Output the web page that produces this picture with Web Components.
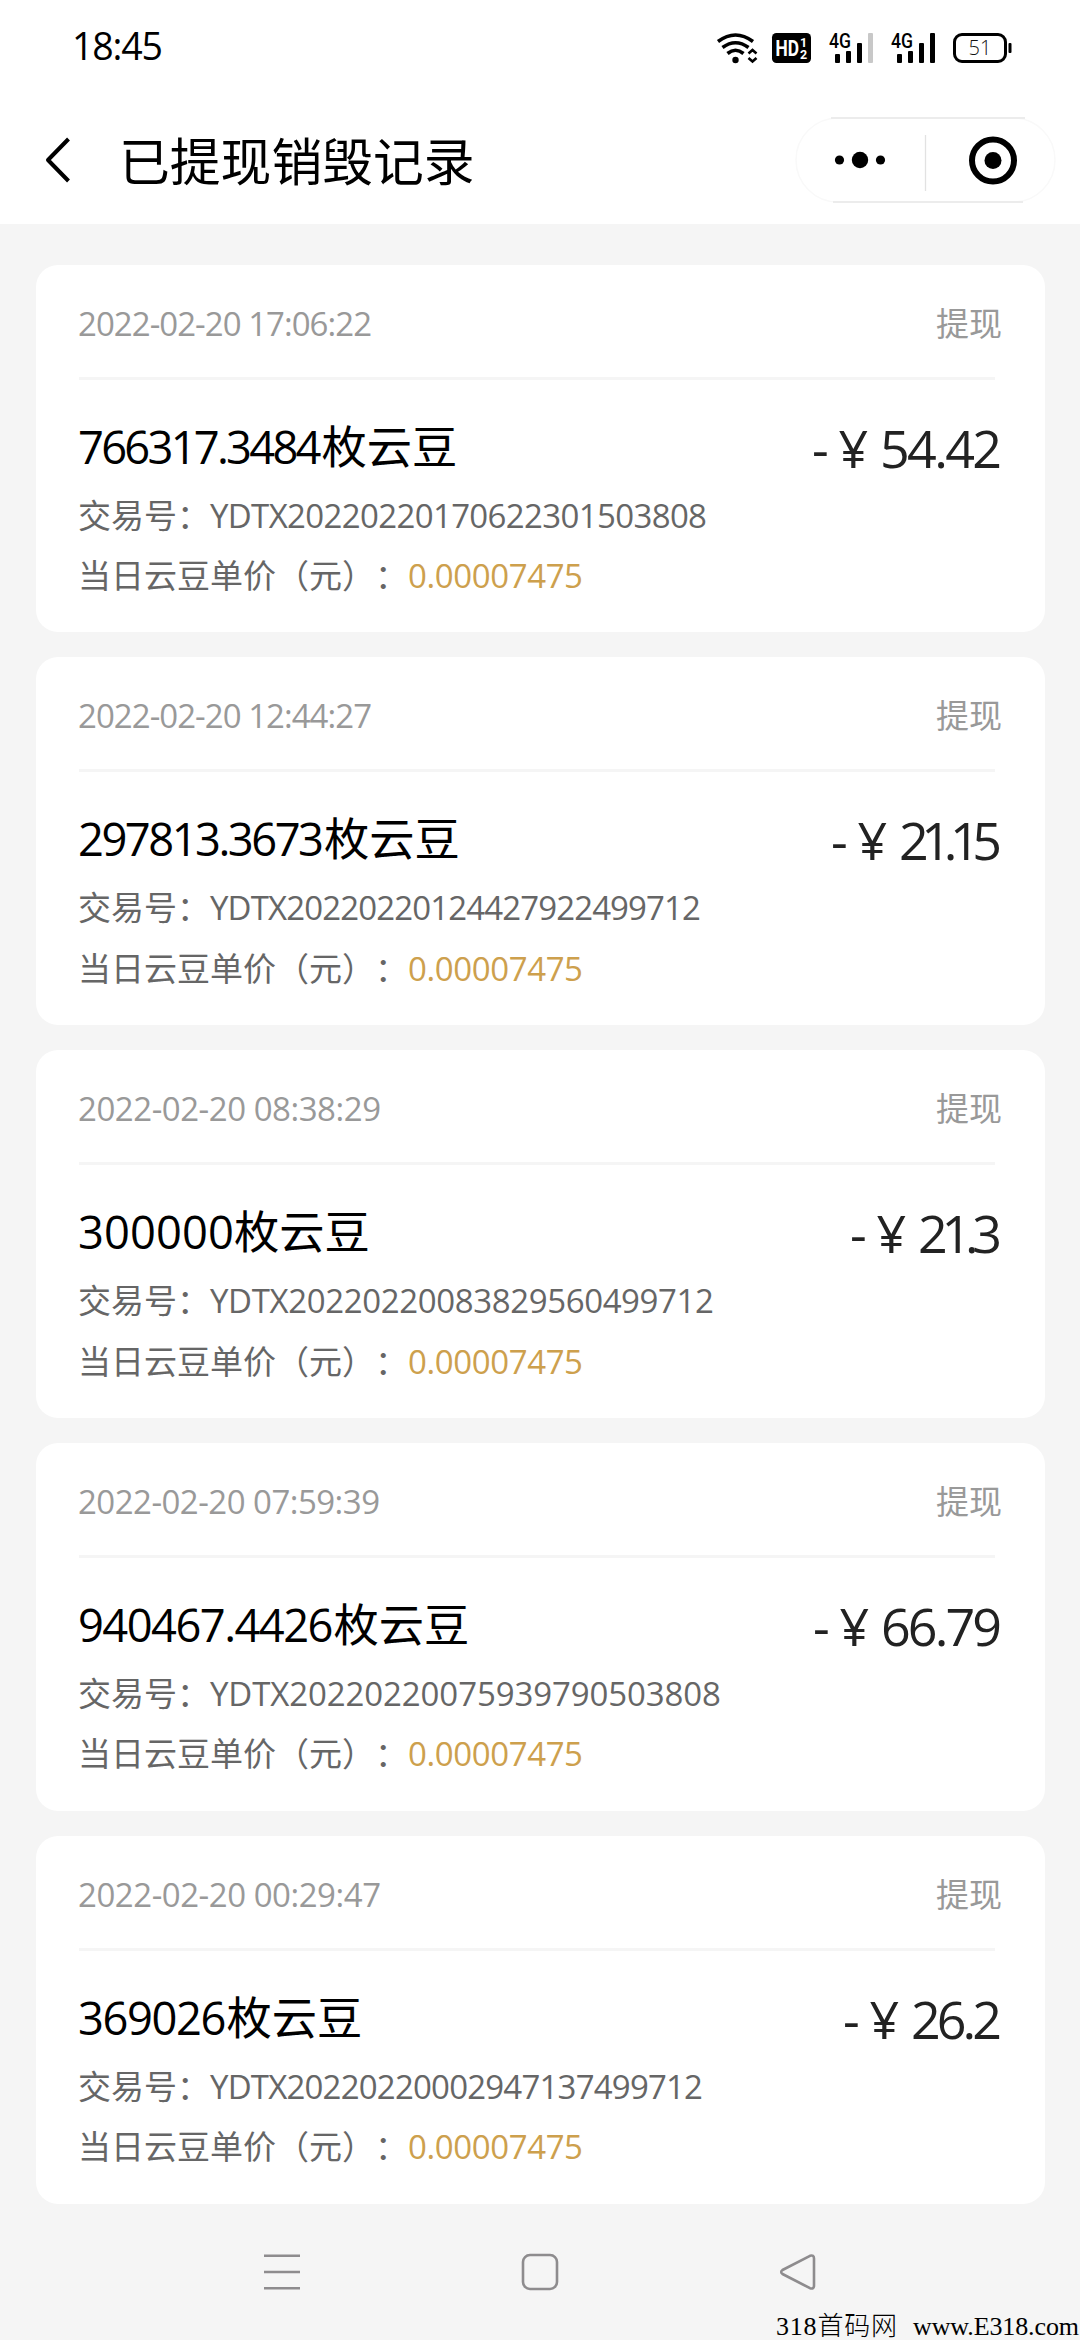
<!DOCTYPE html>
<html lang="zh-CN">
<head>
<meta charset="utf-8">
<title>已提现销毁记录</title>
<style>
    body {
        margin: 0;
        background: #f5f5f5;
        font-family: "Open Sans", "Noto Sans CJK SC", sans-serif;
        text-spacing-trim: space-all;
        color: #000;
    }
</style>
</head>
<body>
<app-page>
    <status-bar slot="status" time="18:45" battery="51"></status-bar>
    <title-bar slot="title">已提现销毁记录</title-bar>
    <record-card date="2022-02-20 17:06:22" count="766317.3484" amount="54.42" serial="YDTX20220220170622301503808" price="0.00007475" widths="294,243.5,122,497"></record-card>
    <record-card date="2022-02-20 12:44:27" count="297813.3673" amount="21.15" serial="YDTX20220220124427922499712" price="0.00007475" widths="294,246,103,491"></record-card>
    <record-card date="2022-02-20 08:38:29" count="300000" amount="21.3" serial="YDTX20220220083829560499712" price="0.00007475" widths="303,156,84,504"></record-card>
    <record-card date="2022-02-20 07:59:39" count="940467.4426" amount="66.79" serial="YDTX20220220075939790503808" price="0.00007475" widths="302,255.5,121,511"></record-card>
    <record-card date="2022-02-20 00:29:47" count="369026" amount="26.2" serial="YDTX20220220002947137499712" price="0.00007475" widths="303,148.5,91,493"></record-card>
    <system-nav slot="nav"></system-nav>
    <site-mark slot="mark"></site-mark>
</app-page>

<script>
// Text spread (or tightened) to a given width with letter-spacing
class FitText extends HTMLElement {
    constructor() {
        super();
        this.attachShadow({ mode: "open" });
        this.shadowRoot.innerHTML = `
        <style>
          :host { display: inline-block; }
          span { display: inline-block; white-space: pre; }
        </style>
        <span><slot></slot></span>
      `;
    }

    connectedCallback() {
        const span = this.shadowRoot.querySelector("span");
        const width = parseFloat(this.getAttribute("width"));
        const natural = span.getBoundingClientRect().width;
        const spacing = (width - natural) / (this.textContent.length - 1);
        span.style.letterSpacing = `${spacing}px`;
        span.style.marginRight = `${-spacing}px`;
    }
}

class AppPage extends HTMLElement {
    constructor() {
        super();
        this.attachShadow({ mode: "open" });
        this.shadowRoot.innerHTML = `
        <style>
          :host {
            display: flex;
            flex-direction: column;
            position: relative;
            width: 1080px;
            height: 2340px;
            overflow: hidden;
          }
          main {
            display: flex;
            flex-direction: column;
            gap: 25px;
            padding: 41px 35px 0 36px;
          }
        </style>
        <slot name="status"></slot>
        <slot name="title"></slot>
        <main><slot></slot></main>
        <slot name="nav"></slot>
        <slot name="mark"></slot>
      `;
    }
}

class StatusBar extends HTMLElement {
    constructor() {
        super();
        this.attachShadow({ mode: "open" });
        this.shadowRoot.innerHTML = `
        <style>
          :host {
            display: flex;
            justify-content: space-between;
            align-items: center;
            box-sizing: border-box;
            height: 97px;
            padding: 0 68px 0 72px;
            background: #fff;
          }
          .time { font-size: 37.5px; line-height: 50px; margin-top: -3px; }
          .icons { display: flex; align-items: center; }
          svg { display: block; overflow: visible; }
          .wifi { margin-right: 15px; }
          .hd { margin-right: 18px; }
          .sim { margin-right: 18px; }
        </style>
        <fit-text class="time" width="91">${this.getAttribute("time")}</fit-text>
        <div class="icons">
          <svg class="wifi" width="40" height="30" viewBox="0 0 40 30">
            <g fill="none" stroke="#000" stroke-width="3.6">
              <path d="M1 8.5 Q18.5 -4.5 36 8.5"/>
              <path d="M5.5 14.5 Q18.5 5 31.5 14.5"/>
              <path d="M10.5 20.5 Q18.5 14 26.5 20.5"/>
            </g>
            <circle cx="18.5" cy="27" r="3.2"/>
            <path d="M31.5 20.5 L35.5 17 L39.5 20.5 M31.5 25 L35.5 28.5 L39.5 25" fill="none" stroke="#000" stroke-width="2.6"/>
          </svg>
          <svg class="hd" width="39" height="30" viewBox="0 0 39 30">
            <rect width="39" height="30" rx="4.5"/>
            <g fill="#fff" font-family="Roboto, sans-serif" font-weight="700">
              <text x="3.5" y="22.5" font-size="21.5" textLength="23.5" lengthAdjust="spacingAndGlyphs">HD</text>
              <text x="28" y="13.5" font-size="12.5">1</text>
              <text x="28" y="25.5" font-size="12.5">2</text>
            </g>
          </svg>
          ${this.signal("#c8c8c8")}
          ${this.signal("#000")}
          <svg width="59" height="30" viewBox="0 0 59 30">
            <rect x="1.5" y="1.5" width="51" height="27" rx="7.5" fill="#fff" stroke="#000" stroke-width="3"/>
            <rect x="55.5" y="10" width="3" height="10" rx="1"/>
            <text x="27" y="22" font-size="20" text-anchor="middle" font-weight="300" fill="#111">${this.getAttribute("battery")}</text>
          </svg>
        </div>
      `;
    }

    signal(last) {
        return `
          <svg class="sim" width="44" height="30" viewBox="0 0 44 30">
            <text x="0" y="14.5" font-family="Roboto, sans-serif" font-weight="500" font-size="19.5" textLength="22" lengthAdjust="spacingAndGlyphs">4G</text>
            <rect x="6" y="21" width="5" height="9" rx="1"/>
            <rect x="17" y="18" width="5" height="12" rx="1"/>
            <rect x="28" y="10" width="5" height="20" rx="1"/>
            <rect x="39" y="0" width="5" height="30" rx="1" fill="${last}"/>
          </svg>
        `;
    }
}

class TitleBar extends HTMLElement {
    constructor() {
        super();
        this.attachShadow({ mode: "open" });
        this.shadowRoot.innerHTML = `
        <style>
          :host {
            display: flex;
            align-items: center;
            box-sizing: border-box;
            height: 129px;
            padding: 0 24px 0 44px;
            background: #fff;
          }
          h1 {
            flex: 1;
            margin: 5px 0 0 47px;
            font-size: 50.8px;
            font-weight: 400;
            line-height: 70px;
          }
          svg { display: block; }
        </style>
        <svg width="28" height="48" viewBox="0 0 28 48">
          <path d="M24.5 3 L4 24 L24.5 45" fill="none" stroke="#000" stroke-width="4" stroke-linejoin="round"/>
        </svg>
        <h1><slot></slot></h1>
        <svg width="261" height="86" viewBox="0 0 261 86">
          <rect x="1" y="1" width="259" height="84" rx="42" fill="#fff" stroke="#f9f9f9" stroke-width="1.5"/>
          <path d="M36 1 H230 M38 85 H228" stroke="#ececec" stroke-width="2"/>
          <path d="M130.5 18 V74" stroke="#e2e2e2" stroke-width="1.3"/>
          <circle cx="44.5" cy="43" r="4.6"/>
          <circle cx="65" cy="43" r="8.2"/>
          <circle cx="85.5" cy="43" r="4.6"/>
          <circle cx="198" cy="43.5" r="21" fill="none" stroke="#000" stroke-width="6"/>
          <circle cx="198" cy="43.5" r="8.5"/>
        </svg>
      `;
    }
}

class RecordCard extends HTMLElement {
    constructor() {
        super();
        this.attachShadow({ mode: "open" });
        this.render();
    }

    render() {
        const get = (name) => this.getAttribute(name);
        const [dateW, countW, amountW, serialW] = get("widths").split(",");

        this.shadowRoot.innerHTML = `
        <style>
          :host {
            display: block;
            box-sizing: border-box;
            height: 367.8px;
            padding: 0 43px 0 42px;
            border-radius: 22px;
            background: #fff;
            font-size: 33px;
          }
          .head {
            display: flex;
            justify-content: space-between;
            align-items: baseline;
            box-sizing: border-box;
            height: 112px;
            padding-top: 28px;
            line-height: 61px;
            color: #999;
          }
          .rule { height: 3px; margin: 0 7px 0 1px; background: #f5f5f5; }
          .main {
            display: flex;
            justify-content: space-between;
            padding: 37px 0 9px;
            line-height: 60px;
          }
          .count { height: 60px; font-size: 45.3px; }
          .amount { height: 59px; padding-top: 1px; font-size: 52px; color: #222; }
          .line { height: 60.4px; line-height: 60.4px; color: #666; white-space: nowrap; }
          .price { color: #cda04d; }
        </style>
        <div class="head">
          <fit-text width="${dateW}">${get("date")}</fit-text>
          <span>提现</span>
        </div>
        <div class="rule"></div>
        <div class="main">
          <div class="count"><fit-text width="${countW}">${get("count")}</fit-text>枚云豆</div>
          <div class="amount"><fit-text width="68">- ¥ </fit-text><fit-text width="${amountW}">${get("amount")}</fit-text></div>
        </div>
        <div class="line">交易号：<fit-text width="${serialW}">${get("serial")}</fit-text></div>
        <div class="line">当日云豆单价（元）：<fit-text class="price" width="175">${get("price")}</fit-text></div>
      `;
    }
}

class SystemNav extends HTMLElement {
    constructor() {
        super();
        this.attachShadow({ mode: "open" });
        this.shadowRoot.innerHTML = `
        <style>
          :host {
            display: flex;
            justify-content: center;
            align-items: center;
            gap: 220px;
            height: 138px;
          }
          svg { display: block; fill: none; stroke: #8e8c8e; stroke-width: 2.6; stroke-linejoin: round; }
        </style>
        <svg width="38" height="38" viewBox="0 0 38 38"><path d="M1 2.7 H37 M1 19 H37 M1 35.3 H37"/></svg>
        <svg width="38" height="38" viewBox="0 0 38 38"><rect x="2" y="2" width="34" height="34" rx="7"/></svg>
        <svg width="38" height="38" viewBox="0 0 38 38"><path d="M3.5 17 L31 2.8 Q35 1.5 35 5.5 V32.5 Q35 36.5 31 35.2 L3.5 21 Q0.8 19 3.5 17 Z"/></svg>
      `;
    }
}

class SiteMark extends HTMLElement {
    constructor() {
        super();
        this.attachShadow({ mode: "open" });
        this.shadowRoot.innerHTML = `
        <style>
          /* sits over the bottom edge of the screen */
          :host {
            position: absolute;
            right: 1px;
            bottom: 0;
            display: flex;
            align-items: baseline;
            gap: 16px;
            height: 27px;
            font: 300 26px/27px "Liberation Serif", "Noto Sans CJK SC", serif;
          }
        </style>
        <fit-text width="121">318首码网</fit-text>
        <fit-text width="166">www.E318.com</fit-text>
      `;
    }
}

customElements.define("fit-text", FitText);
customElements.define("app-page", AppPage);
customElements.define("status-bar", StatusBar);
customElements.define("title-bar", TitleBar);
customElements.define("record-card", RecordCard);
customElements.define("system-nav", SystemNav);
customElements.define("site-mark", SiteMark);
</script>
</body>
</html>
